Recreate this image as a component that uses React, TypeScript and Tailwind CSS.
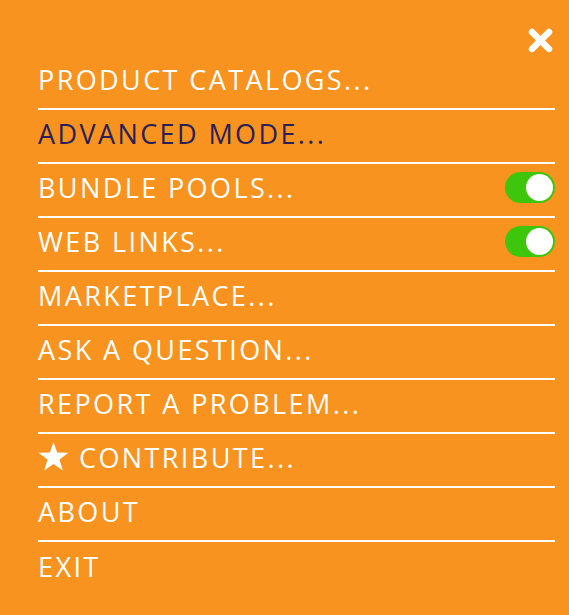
import React from "react";

const items: { label: string; color?: string; toggle?: boolean; star?: boolean }[] = [
  { label: "PRODUCT CATALOGS..." },
  { label: "ADVANCED MODE...", color: "text-[#2a1f5a]" },
  { label: "BUNDLE POOLS...", toggle: true },
  { label: "WEB LINKS...", toggle: true },
  { label: "MARKETPLACE..." },
  { label: "ASK A QUESTION..." },
  { label: "REPORT A PROBLEM..." },
  { label: "CONTRIBUTE...", star: true },
  { label: "ABOUT" },
  { label: "EXIT" },
];

function Toggle() {
  return (
    <div className="w-[50px] h-[31px] mb-[6px] rounded-full bg-[#3ec60c] flex items-center justify-end pr-[2px]">
      <div className="w-[27px] h-[27px] rounded-full bg-white" />
    </div>
  );
}

function Star() {
  return (
    <svg width="31" height="29" viewBox="0 0 31 29" className="mr-[10px] -mt-[3px] shrink-0">
      <polygon
        points="15.5,0 19.2,10.6 30.5,10.8 21.5,17.6 24.8,28.5 15.5,22 6.2,28.5 9.5,17.6 0.5,10.8 11.8,10.6"
        fill="#ffffff"
      />
    </svg>
  );
}

export default function App() {
  return (
    <div
      className="w-[569px] h-[615px] bg-[#f7931e] pl-[38px] pr-[14px] flex flex-col"
      style={{ fontFamily: '"Open Sans", "Noto Sans", sans-serif' }}
    >
      <div className="h-[56px] shrink-0 flex justify-end items-start pt-[27px] pr-[1px]">
        <svg width="27" height="27" viewBox="0 0 27 27">
          <path d="M5 5 L22 22 M22 5 L5 22" stroke="#ffffff" strokeWidth="6.5" strokeLinecap="round" />
        </svg>
      </div>
      {items.map((it, i) => (
        <div
          key={i}
          className={`h-[54px] shrink-0 flex items-center justify-between ${i < items.length - 1 ? "border-b-2 border-white" : ""}`}
        >
          <span className={`flex items-center text-[27px] leading-[48px] pb-[4px] tracking-[2.4px] ${it.color ?? "text-white"}`}>
            {it.star && <Star />}
            {it.label}
          </span>
          {it.toggle && <Toggle />}
        </div>
      ))}
    </div>
  );
}
